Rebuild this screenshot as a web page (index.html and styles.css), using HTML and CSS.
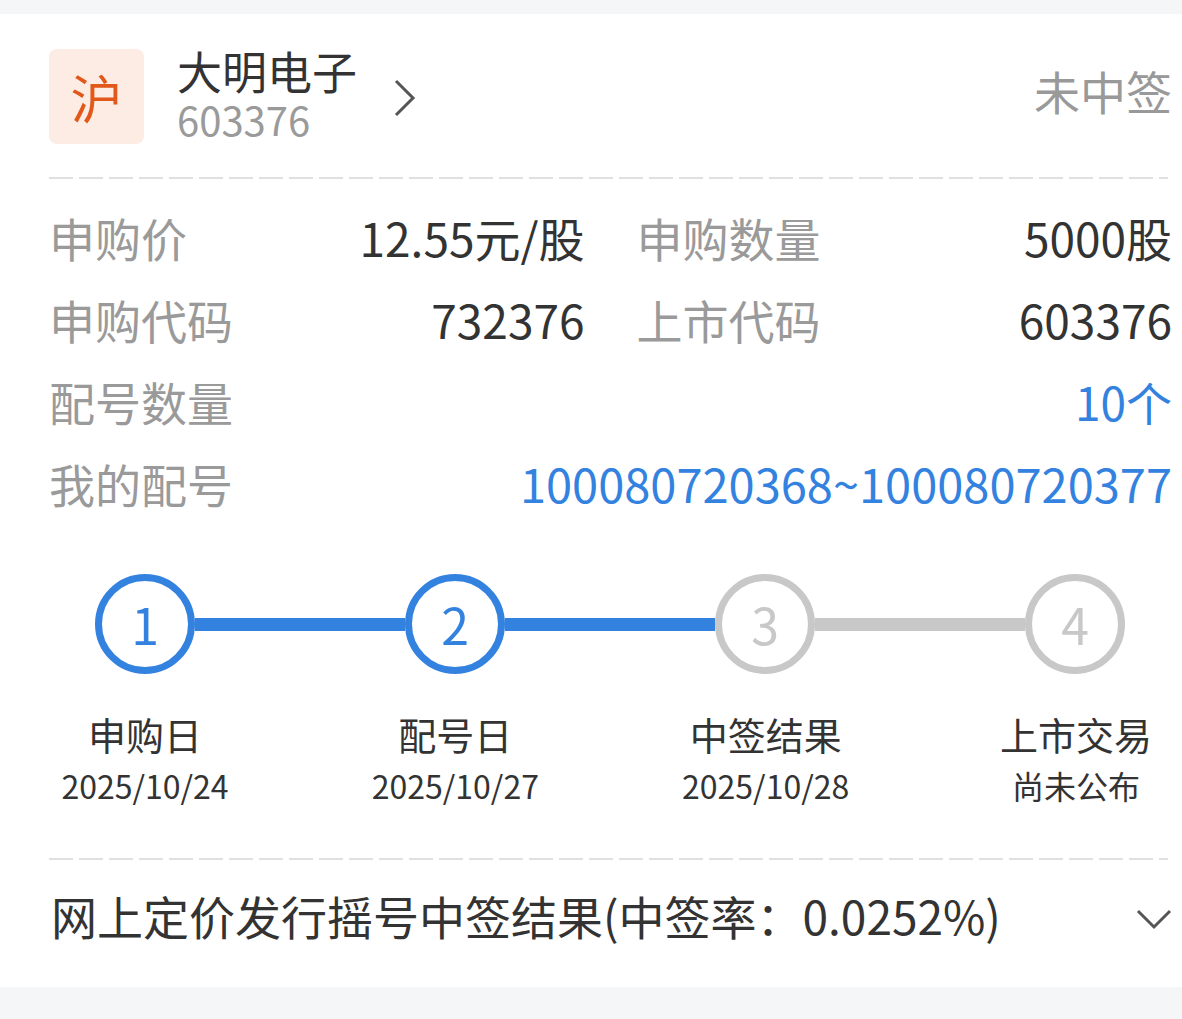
FILE: index.html
```html
<!DOCTYPE html>
<html lang="zh-CN">
<head>
<meta charset="utf-8">
<title>大明电子</title>
<link rel="stylesheet" href="styles.css">
</head>
<body>
<div class="card">
  <div class="header">
    <div class="badge">沪</div>
    <div class="stock">
      <div class="name">大明电子</div>
      <div class="code">603376</div>
    </div>
    <svg class="chev-right" width="24" height="38" viewBox="0 0 24 38"><path d="M3 2 L20 19 L3 36" fill="none" stroke="#555" stroke-width="3"/></svg>
    <div class="status">未中签</div>
  </div>
  <div class="dash"></div>
  <div class="info">
    <div class="row two">
      <div class="pair"><span class="label">申购价</span><span class="value">12.55元/股</span></div>
      <div class="pair"><span class="label">申购数量</span><span class="value">5000股</span></div>
    </div>
    <div class="row two">
      <div class="pair"><span class="label">申购代码</span><span class="value">732376</span></div>
      <div class="pair"><span class="label">上市代码</span><span class="value">603376</span></div>
    </div>
    <div class="row pair">
      <span class="label">配号数量</span><span class="value blue">10个</span>
    </div>
    <div class="row pair">
      <span class="label">我的配号</span><span class="value blue big">100080720368~100080720377</span>
    </div>
  </div>
  <div class="steps">
    <div class="track">
      <div class="circle on">1</div>
      <div class="line on"></div>
      <div class="circle on">2</div>
      <div class="line on"></div>
      <div class="circle">3</div>
      <div class="line"></div>
      <div class="circle">4</div>
    </div>
    <div class="labels">
      <div class="step"><div class="step-title">申购日</div><div class="step-date">2025/10/24</div></div>
      <div class="step"><div class="step-title">配号日</div><div class="step-date">2025/10/27</div></div>
      <div class="step"><div class="step-title">中签结果</div><div class="step-date">2025/10/28</div></div>
      <div class="step"><div class="step-title">上市交易</div><div class="step-date">尚未公布</div></div>
    </div>
  </div>
  <div class="dash dash-bottom"></div>
  <div class="result">
    <span class="result-text">网上定价发行摇号中签结果(中签率：0.0252%)</span>
    <svg class="chev-down" width="36" height="22" viewBox="0 0 36 22"><path d="M2 2 L18 18 L34 2" fill="none" stroke="#555" stroke-width="3"/></svg>
  </div>
</div>
</body>
</html>
```
FILE: styles.css
```css
html, body {
  margin: 0;
  padding: 0;
  background: #f5f6f8;
}
body {
  font-family: "Noto Sans CJK SC", "Noto Sans", sans-serif;
  color: #333;
  padding-top: 14px;
}
.card {
  background: #fff;
  padding: 35px 10px 0 49px;
}
.header {
  display: flex;
  align-items: center;
  height: 95px;
}
.badge {
  width: 95px;
  height: 95px;
  border-radius: 8px;
  background: #fdece3;
  color: #e2571a;
  font-size: 52px;
  line-height: 95px;
  text-align: center;
  flex: none;
}
.stock {
  margin-left: 33px;
  display: flex;
  flex-direction: column;
  gap: 2px;
}
.name {
  font-size: 45px;
  line-height: 46px;
  color: #333;
  margin-top: -4px;
}
.code {
  font-size: 40px;
  line-height: 46px;
  color: #9a9a9a;
}
.chev-right {
  margin-left: 36px;
  margin-top: 2px;
  flex: none;
}
.status {
  margin-left: auto;
  font-size: 46px;
  line-height: 60px;
  color: #999;
  margin-top: -14px;
}
.dash {
  height: 2px;
  margin-top: 33px;
  margin-right: 4px;
  background: repeating-linear-gradient(to right, #e0e0e0 0 24px, transparent 24px 30px);
}
.info {
  margin-top: 17px;
}
.row {
  height: 82px;
  line-height: 82px;
}
.row.two {
  display: grid;
  grid-template-columns: 1fr 1fr;
  column-gap: 52px;
}
.pair {
  display: flex;
  justify-content: space-between;
  align-items: center;
}
.label {
  font-size: 46px;
  color: #9a9a9a;
}
.value {
  font-size: 46px;
  color: #333;
}
.value.blue {
  color: #3482e0;
}
.value.big {
  font-size: 47px;
}
.steps {
  margin-top: 50px;
}
.track {
  display: flex;
  align-items: center;
  padding: 0 47px 0 46px;
}
.circle {
  width: 100px;
  height: 100px;
  box-sizing: border-box;
  border-radius: 50%;
  border: 7px solid #c8c8c8;
  color: #c8c8c8;
  font-size: 50px;
  line-height: 84px;
  text-align: center;
  flex: none;
}
.circle.on {
  border-color: #3482e0;
  color: #3482e0;
}
.line {
  flex: 1;
  height: 13px;
  background: #c8c8c8;
}
.line.on {
  background: #3482e0;
}
.labels {
  display: flex;
  justify-content: space-between;
  margin-top: 36px;
}
.step {
  width: 192px;
  text-align: center;
}
.step-title {
  font-size: 38px;
  line-height: 48px;
  color: #333;
}
.step-date {
  font-size: 32px;
  line-height: 48px;
  color: #333;
  margin-top: 3px;
}
.dash-bottom {
  margin-top: 49px;
}
.result {
  display: flex;
  align-items: center;
  justify-content: space-between;
  height: 56px;
  padding: 27px 0 44px;
}
.result-text {
  font-size: 46px;
  line-height: 56px;
  color: #333;
  margin-left: 2px;
}
.chev-down {
  margin-top: 10px;
  flex: none;
}
```
